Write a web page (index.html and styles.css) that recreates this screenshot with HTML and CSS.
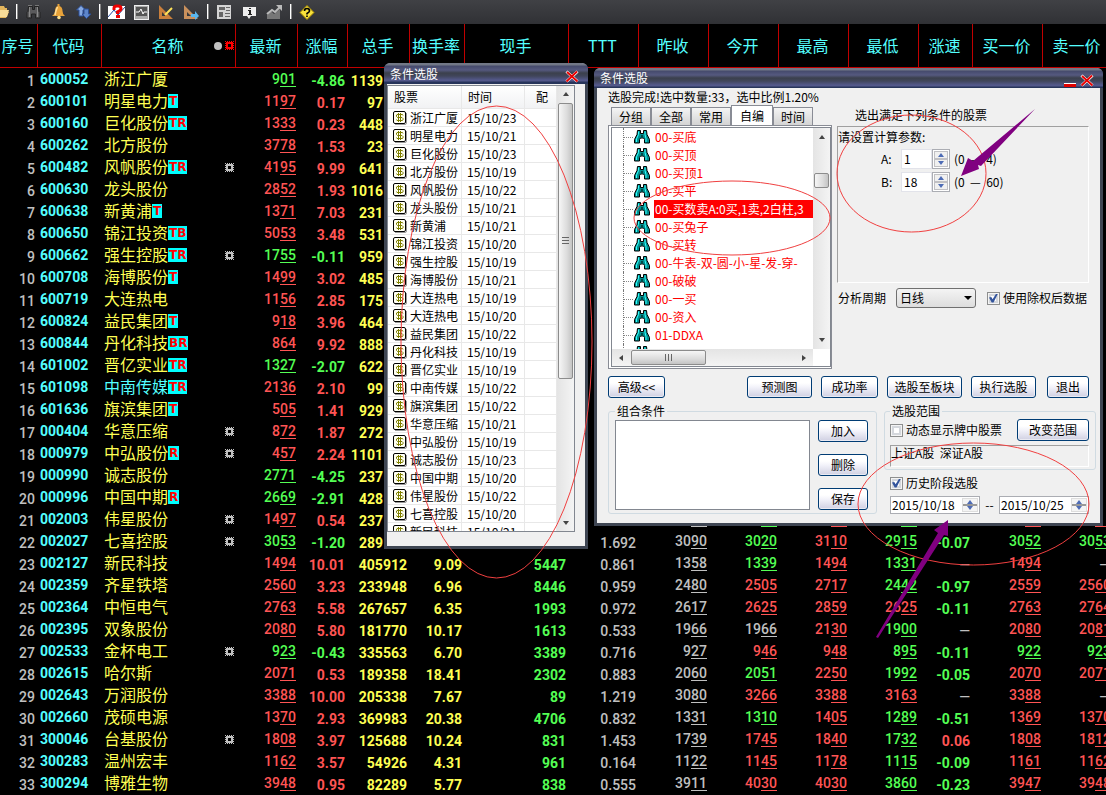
FILE: index.html
```html
<!DOCTYPE html>
<html lang="zh-CN">
<head>
<meta charset="utf-8">
<title>条件选股</title>
<link rel="stylesheet" href="styles.css">
</head>
<body>
<svg class="defs" aria-hidden="true">
  <symbol id="sun" viewBox="0 0 9 9"><path fill-rule="evenodd" d="M1 1h7v7H1zM3 3v3h3V3z"/><path d="M0 0h1v1H0zM8 0h1v1H8zM0 8h1v1H0zM8 8h1v1H8zM2 0h1v1H2zM4 0h1v1H4zM6 0h1v1H6zM2 8h1v1H2zM4 8h1v1H4zM6 8h1v1H6zM0 2h1v1H0zM0 4h1v1H0zM0 6h1v1H0zM8 2h1v1H8zM8 4h1v1H8zM8 6h1v1H8z"/></symbol>
  <symbol id="dollar" viewBox="0 0 14 14"><path d="M2 13.500h10q1.500 0 1.500-1.500V2" fill="none" stroke="#999"/><rect x=".5" y=".5" width="12" height="12" rx="1.500" fill="#fffff4" stroke="#000"/><path d="M10 4.500V4L9.500 3.500H4L3.500 4v1.500L4.500 6.500h4.500l1 1V9l-.5.5H4L3.500 9v-.5M5.500 2v9M7.500 2v9" fill="none" stroke="#808000"/></symbol>
  <symbol id="scope" viewBox="0 0 16 14"><path d="M3.500.5h3v3h3v-3h3l.5 4 2.500 5v3.500h-5V9.500l-1-1.500h-3l-1 1.500V13h-5V9.500l2.500-5z" fill="#008f8f" stroke="#000"/><path d="M4.500 1.500v3l-2 4.500v3M11 1.500v3l1 4v3.500" fill="none" stroke="#3ff"/><path d="M7.500 5h1v2h-1z" fill="#000"/></symbol>
  <symbol id="cross" viewBox="0 0 14 13"><path d="M1.500 1.500l11 10M12.500 1.500l-11 10" fill="none" stroke="#fff" stroke-width="3"/><path d="M2 2l10.500 9.500M12 1.500L1.500 11.500" fill="none" stroke="#e80000" stroke-width="1.800"/></symbol>
</svg>

<main class="screen">
  <nav class="toolbar" aria-label="工具栏">
    <button class="tool tool-cut" aria-label="打开"><svg viewBox="0 0 9 18"><path d="M0 4h4l1 2h2v4h2l-3 6H0z" fill="#e3b55c"/><path d="M0 8h9l-2 7H0z" fill="#f7dc98"/></svg></button>
    <i class="sep"></i>
    <button class="tool" aria-label="查找"><svg viewBox="0 0 17 18"><path d="M3.500 4.500h4v3h2v-3h4l.5 5 1 1v5.500h-4.500v-4h-4v4H2v-5.500l1-1z" fill="#5a5a5c" stroke="#222"/><path d="M4.500 5v10M12.500 5v10" stroke="#8a8a8a"/><path d="M3 3h4v1H3zM10 3h4v1h-4z" fill="#777"/></svg></button>
    <button class="tool" aria-label="提醒"><svg viewBox="0 0 17 18"><path d="M7.500 2h2v2q3 1 3 5 0 3 2.500 5H2q3-2 3-5 0-4 2.500-5z" fill="#e8a33a"/><path d="M7.500 5q-1.500 3-2.500 8" stroke="#ffe09a" stroke-width="1.500" fill="none"/><circle cx="9" cy="15.500" r="1.800" fill="#ffe08a"/></svg></button>
    <button class="tool" aria-label="刷新"><svg viewBox="0 0 17 18"><path d="M1.500 8l4.500-4.500L10.500 8H8v6H4V8z" fill="#86a9e0" stroke="#2c4f96"/><path d="M9 7h4.500v5H16l-4.500 4.500L7 12h2z" fill="#5d86ca" stroke="#2c4f96"/></svg></button>
    <i class="sep"></i>
    <button class="tool" aria-label="帮助图"><svg viewBox="0 0 17 18"><path d="M0 4h17v13H0z" fill="#fff"/><path d="M0 15l6-7 4 5 7-8" fill="none" stroke="#224a9c"/><path d="M6 8V6q0-2 3-2h1q3 0 3 2.500 0 2-3.500 3.500v2" fill="none" stroke="#e00" stroke-width="3"/><path d="M8 13h4v3H8z" fill="#e00"/></svg></button>
    <button class="tool" aria-label="监视"><svg viewBox="0 0 17 18"><rect x="1.500" y="3.500" width="14" height="14" fill="#aaa" stroke="#eee"/><path d="M3 5h11v9H3z" fill="#555"/><path d="M3 10h3l2-3 2 5 1-2h3" fill="none" stroke="#fff"/></svg></button>
    <button class="tool" aria-label="画线"><svg viewBox="0 0 17 18"><path fill-rule="evenodd" d="M1 3l14 14H1zM4 10v4h4z" fill="#c97f3c"/><path d="M7 13L14 6" stroke="#ffe35a" stroke-width="2"/></svg></button>
    <button class="tool" aria-label="移动画线"><svg viewBox="0 0 17 18"><path fill-rule="evenodd" d="M1 3l14 14H1zM4 10v4h4z" fill="#c9905c"/><path d="M8 12h4V9l4 5-4 4v-3H8z" fill="#59b6ee"/></svg></button>
    <i class="sep"></i>
    <button class="tool" aria-label="资讯"><svg viewBox="0 0 17 18"><path d="M1 3h14v14H1z" fill="#d4d4d4"/><path d="M3 5h6v3H3zM3 10h4v5H3zM10 5h4v1h-4zM10 8h4v1h-4zM9 11h5v1H9zM9 14h5v1H9z" fill="#666"/></svg></button>
    <button class="tool" aria-label="信息"><svg viewBox="0 0 17 18"><path d="M2 5h13v9h-5l-2 3-2-3H2z" fill="#eee"/><path d="M8 6h2v1H8zM7 8h3v4h1v1H7v-1h1V9H7z" fill="#222"/></svg></button>
    <button class="tool" aria-label="走势"><svg viewBox="0 0 17 18"><path d="M1 17v-4l4-4 3 3 6-5v10z" fill="#777"/><path d="M1 12l5-4 3 2 5-5" fill="none" stroke="#bbb" stroke-width="2"/><path d="M10 3h6v6z" fill="#bbb"/></svg></button>
    <i class="sep"></i>
    <button class="tool" aria-label="帮助"><svg viewBox="0 0 17 18"><path d="M8 3.500l7 7-7 7-7-7z" fill="#f8e23c" stroke="#a88a00"/><path d="M5.500 9q0-2.500 2.500-2.500T10.500 9q0 1-2.500 2.500v1M8 13.500V15" fill="none" stroke="#000" stroke-width="1.600"/></svg></button>
  </nav>

  <table class="quotes">
    <colgroup><col class="c38"><col class="c64"><col class="c134"><col class="c62"><col class="c50"><col class="c62"><col class="c55"><col class="c104"><col class="c70"><col class="c70"><col class="c70"><col class="c70"><col class="c70"><col class="c54"><col class="c70"><col class="c70"></colgroup>
    <thead><tr>
      <th>序号</th><th>代码</th>
      <th class="th-name">名称<span class="marks"><i class="dot"></i><svg class="sun sun-red"><use href="#sun"/></svg></span></th>
      <th>最新</th><th>涨幅</th><th>总手</th><th>换手率</th><th>现手</th><th>TTT</th><th>昨收</th><th>今开</th><th>最高</th><th>最低</th><th>涨速</th><th>买一价</th><th>卖一价</th>
    </tr></thead>
    <tbody id="quotes"></tbody>
  </table>

  <section class="window list-window" aria-label="选股结果">
    <header class="titlebar"><h2>条件选股</h2><button class="close" aria-label="关闭"><svg><use href="#cross"/></svg></button></header>
    <div class="list-body">
      <div class="list-box">
        <table class="picks">
          <thead><tr><th class="p-name">股票</th><th class="p-date">时间</th><th class="p-cfg">配</th></tr></thead>
          <tbody id="picks"></tbody>
        </table>
        <div class="vbar list-bar"><i class="up"></i><i class="thumb"></i><i class="down"></i></div>
      </div>
    </div>
  </section>

  <section class="window pick-window" aria-label="条件选股">
    <header class="titlebar"><h2>条件选股</h2><button class="minimize" aria-label="最小化"></button><button class="close" aria-label="关闭窗口"><svg><use href="#cross"/></svg></button></header>
    <div class="pick-body">
      <p class="status">选股完成!选中数量:33，选中比例1.20%</p>
      <div class="upper">
        <div class="formulas">
          <div class="tabs" role="tablist"><button>分组</button><button>全部</button><button>常用</button><button class="active">自编</button><button>时间</button></div>
          <div class="pane"><div class="tree-box">
            <ul class="tree" id="tree"></ul>
            <div class="vbar tree-bar"><i class="up"></i><i class="thumb"></i><i class="down"></i></div>
            <div class="hbar"><i class="left"></i><i class="thumb"></i><i class="right"></i></div>
          </div></div>
        </div>
        <div class="settings">
          <p class="settings-title">选出满足下列条件的股票</p>
          <div class="params">
            <p>请设置计算参数:</p>
            <div class="param"><label for="pa">A:</label><input id="pa" value="1"><span class="spin"><button aria-label="A 加"><i class="up"></i></button><button aria-label="A 减"><i class="down"></i></button></span><span>(0 &nbsp;— &nbsp;4)</span></div>
            <div class="param"><label for="pb">B:</label><input id="pb" value="18"><span class="spin"><button aria-label="B 加"><i class="up"></i></button><button aria-label="B 减"><i class="down"></i></button></span><span>(0 &nbsp;— &nbsp;60)</span></div>
          </div>
          <div class="period">
            <label for="period">分析周期</label>
            <span class="select"><select id="period"><option>日线</option></select></span>
            <label class="check"><input type="checkbox" checked>使用除权后数据</label>
          </div>
        </div>
      </div>
      <div class="actions">
        <button class="btn w57">高级&lt;&lt;</button>
        <button class="btn w65 push">预测图</button>
        <button class="btn w57">成功率</button>
        <button class="btn w75">选股至板块</button>
        <button class="btn w65">执行选股</button>
        <button class="btn w42 leave">退出</button>
      </div>
      <div class="lower">
        <fieldset class="combo">
          <legend>组合条件</legend>
          <div class="combo-in">
            <div class="combo-list"></div>
            <div class="combo-btns"><button class="btn">加入</button><button class="btn">删除</button><button class="btn">保存</button></div>
          </div>
        </fieldset>
        <div class="scope-col">
          <fieldset class="range">
            <legend>选股范围</legend>
            <div class="range-row"><label class="check"><input type="checkbox">动态显示牌中股票</label><button class="btn w72">改变范围</button></div>
            <div class="sunken">上证A股 &nbsp;深证A股</div>
          </fieldset>
          <div class="history">
            <label class="check"><input type="checkbox" checked>历史阶段选股</label>
            <div class="dates">
              <span class="date"><input aria-label="开始日期" value="2015/10/18"><button aria-label="调整开始日期"><i class="up"></i><i class="down"></i></button></span>
              <span>--</span>
              <span class="date"><input aria-label="结束日期" value="2015/10/25"><button aria-label="调整结束日期"><i class="up"></i><i class="down"></i></button></span>
            </div>
          </div>
        </div>
      </div>
    </div>
  </section>

  <svg class="notes" width="1106" height="795" viewBox="0 0 1106 795" aria-hidden="true">
    <g fill="none" stroke="#f04040" stroke-width="1">
      <ellipse cx="496.500" cy="342" rx="95.500" ry="236"/>
      <ellipse cx="732" cy="218" rx="98" ry="37"/>
      <ellipse cx="911.500" cy="173.500" rx="74.500" ry="58.500"/>
      <ellipse cx="973.500" cy="504" rx="115.500" ry="61"/>
    </g>
    <path d="M961 176l7-18 5 3 62-52-54 57-3-1 1 4zM948 520l-14 10 4 3-62 104 2 1 66-103 4 1z" fill="#800080"/>
  </svg>
</main>
<script src="app.js"></script>
</body>
</html>
```

FILE: styles.css
```css
* { box-sizing: border-box; }
body { margin: 0; background: #000; overflow: hidden; font-family: "Noto Sans CJK SC", sans-serif; }
button, input, select { font: inherit; color: inherit; margin: 0; padding: 0; border: 0; background: none; border-radius: 0; }
p, h2, ul { margin: 0; padding: 0; font-weight: 400; }
i { font-style: normal; }
.defs { position: absolute; width: 0; height: 0; }
.screen { position: relative; min-height: 100vh; overflow: hidden; }

/* toolbar */
.toolbar { display: flex; align-items: center; gap: 8px; height: 24px; background: linear-gradient(#404145, #303135); }
.tool { flex: none; width: 17px; height: 18px; display: block; }
.tool-cut { width: 9px; }
.tool svg { display: block; width: 100%; height: 100%; margin-top: -2px; }
.sep { flex: none; width: 1px; height: 15px; margin: -2px 0 0 -1px; background: #fff; box-shadow: 1px 0 #888; }

/* quotes */
.quotes { width: 1113px; table-layout: fixed; border-collapse: separate; border-spacing: 0; }
.c38 { width: 38px; } .c64 { width: 64px; } .c134 { width: 134px; } .c62 { width: 62px; } .c50 { width: 50px; }
.c55 { width: 55px; } .c104 { width: 104px; } .c70 { width: 70px; } .c54 { width: 54px; }
.quotes th { height: 44px; padding: 0 2px 2px 0; border: solid #c00000; border-width: 0 1px 1px 0; color: #54ffff; font-weight: 400; font-size: 16px; line-height: 24px; text-align: center; white-space: nowrap; }
.th-name { position: relative; }
.marks { position: absolute; right: 1px; top: 17px; display: flex; align-items: center; gap: 3px; }
.dot { width: 8px; height: 8px; border-radius: 50%; background: #c0c0c0; }
.sun { display: block; width: 9px; height: 9px; fill: #c0c0c0; }
.sun-red { fill: #f00; }
.quotes td { height: 22px; padding: 0 3px 0 0; text-align: right; white-space: nowrap; font: 700 14px/18px Roboto, "Liberation Sans", sans-serif; vertical-align: bottom; }
.quotes td.idx { color: #c0c0c0; font-weight: 500; }
.quotes td.code { text-align: left; padding: 0 0 2px 2px; color: #54ffff; }
.quotes td.name { padding: 0 2px; vertical-align: top; }
.name div { display: flex; align-items: center; height: 20px; font: 400 16px/20px "Noto Sans CJK SC", sans-serif; color: #ffff54; }
.name .alt { color: #54ffff; }
.tag { height: 14px; margin-top: 2px; padding: 0 1px; background: #0ff; color: #f00; font: 700 12px/14px "DejaVu Sans", sans-serif; }
.name .sun { margin: 2px 0 0 auto; }
.quotes td.price { padding: 0 2px 3px 0; font-weight: 500; line-height: 16px; }
.price u { display: inline-block; width: 16px; height: 16px; border-bottom: 1px solid; text-decoration: none; vertical-align: bottom; }
.quotes td.behind { padding-right: 27px; }
.g { color: #54ff54; } .r { color: #ff5454; } .y { color: #ffff54; } .w { color: #c0c0c0; }
.quotes td.w { font-weight: 500; }

/* windows */
.window { position: absolute; display: flex; flex-direction: column; border: solid #3f4653; border-width: 0 3px 3px; border-radius: 6px 6px 0 0; background: #f0f0f0; color: #000; font-size: 12px; line-height: 16px; }
.titlebar { display: flex; align-items: center; flex: none; height: 21px; margin: 0 -3px; padding: 0 9px 0 6px; border-radius: 6px 6px 0 0; color: #fff; background: linear-gradient(#727887 0 2px, #454a6c 3px, #55597f 7px, #3b404c 10px, #40455a 13px, #53588a 17px, #53588a 18px, #27345a 19px); }
.titlebar h2 { flex: 1; font-size: 12px; line-height: 18px; }
.close { width: 14px; height: 13px; margin-top: 5px; }
.close svg { display: block; width: 14px; height: 13px; }
.minimize { width: 12px; height: 4px; margin: 14px 4px 0 0; background: #e00000; border-top: 1px solid #fff; }
.up, .down, .left, .right { display: block; width: 0; height: 0; border: 3px solid transparent; }
.up { border-top: 0; border-bottom: 4px solid #444; }
.down { border-bottom: 0; border-top: 4px solid #444; }
.left { border-left: 0; border-right: 4px solid #444; }
.right { border-right: 0; border-left: 4px solid #444; }
.vbar { display: flex; flex-direction: column; align-items: center; justify-content: space-between; background: linear-gradient(90deg, #e4e4e4, #f4f4f4); }
.thumb { display: flex; border: 1px solid #8c8c8c; border-radius: 2px; background: linear-gradient(90deg, #f6f6f6, #dcdcdc 60%, #c4c4c4); }
.thumb::after { content: ""; margin: auto; }

.list-window { left: 384px; top: 63px; width: 204px; height: 486px; }
.list-body { flex: 1; min-height: 0; padding: 1px 10px 14px 0; }
.list-box { display: flex; height: 100%; overflow: hidden; border: 1px solid #828790; background: #fff; }
.picks { flex: 1; table-layout: fixed; border-spacing: 0; align-self: flex-start; }
.picks th, .picks td { padding: 0; text-align: left; font-weight: 400; border: solid #e8e8e8; border-width: 0 1px 1px 0; white-space: nowrap; }
.picks th { height: 23px; padding-left: 6px; background: linear-gradient(#fff, #f1f2f4); }
.picks td { height: 18px; line-height: 17px; overflow: hidden; }
.picks .p-name { width: 74px; } .picks .p-date { width: 63px; } .picks .p-cfg { padding-left: 11px; }
.picks td:first-child div { display: flex; align-items: center; gap: 3px; padding-left: 5px; height: 17px; }
.picks td svg { width: 14px; height: 14px; }
.picks td:nth-child(2) { padding-left: 5px; }
.list-bar { flex: none; width: 17px; padding: 6px 1px; }
.list-bar .thumb { width: 15px; height: 276px; margin: 7px 0 auto; }
.list-bar .thumb::after { width: 7px; height: 8px; background: repeating-linear-gradient(#666 0 1px, transparent 1px 3px); }

.pick-window { left: 594px; top: 68px; width: 509px; }
.pick-window .titlebar { height: 20px; }
.pick-body { padding: 0 4px 9px 11px; }
.status { line-height: 17px; }
.upper { display: flex; gap: 5px; margin-right: 7px; }
.formulas { width: 224px; }
.tabs { display: flex; align-items: flex-end; height: 20px; padding-left: 3px; }
.tabs button { height: 18px; width: 40px; border: 1px solid #898c95; border-bottom: 0; background: linear-gradient(#f4f4f4, #d4d4d4); line-height: 17px; }
.tabs .active { width: 42px; height: 20px; background: #fff; }
.pane { border: 1px solid #898c95; padding: 1px 0 1px 2px; background: #fff; }
.tree-box { display: grid; grid-template-columns: 1fr 17px; grid-template-rows: 221px 17px; border: 1px solid #828790; }
.tree { min-width: 0; overflow: hidden; list-style: none; color: #f00; }
.tree li { display: flex; align-items: center; height: 18px; padding-left: 11px; white-space: nowrap; }
.tree li::before { content: ""; flex: none; width: 10px; height: 18px; border-left: 1px dotted #777; background: repeating-linear-gradient(90deg, #888 0 1px, transparent 1px 2px) 0 9px / 10px 1px no-repeat; }
.tree svg { flex: none; width: 16px; height: 14px; }
.tree span { flex: 1; min-width: 0; overflow: hidden; margin-left: 4px; padding-left: 1px; line-height: 18px; }
.tree .selected { background: #f00; color: #fff; }
.tree-bar { padding: 7px 0; }
.tree-bar .thumb { width: 15px; height: 15px; margin: 34px 0 auto; }
.hbar { display: flex; align-items: center; justify-content: space-between; padding: 0 7px; background: linear-gradient(#e4e4e4, #f4f4f4); }
.hbar .thumb { width: 75px; height: 15px; margin: 0 auto 0 8px; background: linear-gradient(#f6f6f6, #dcdcdc 60%, #c4c4c4); }
.hbar .thumb::after { width: 8px; height: 7px; background: repeating-linear-gradient(90deg, #666 0 1px, transparent 1px 3px); }

.settings { flex: 1; }
.settings-title { padding-left: 18px; line-height: 20px; }
.params { height: 157px; margin-top: 1px; border: 1px solid; border-color: #a0a0a0 #fff #fff #a0a0a0; }
.params p { line-height: 19px; }
.param { display: flex; align-items: center; height: 20px; margin: 3px 0 0 43px; }
.param label { width: 20px; }
.param input { width: 31px; height: 20px; padding: 0 0 2px 2px; background: #fff; border: 1px solid #e2e3ea; }
.spin { display: flex; flex-direction: column; width: 18px; height: 20px; margin-right: 4px; padding: 1px; border: 1px solid #abadb3; background: #fff; }
.spin button { flex: 1; display: grid; place-items: center; border: 1px solid #c0c0c4; background: #f0f0f0; }
.spin .up, .date .up { border-bottom-color: #4d6bb5; }
.spin .down, .date .down { border-top-color: #4d6bb5; }
.period { display: flex; align-items: center; height: 20px; margin-top: 5px; padding-left: 1px; white-space: nowrap; }
.select { position: relative; width: 80px; height: 20px; margin: 0 11px 0 10px; }
.select::after { content: ""; position: absolute; right: 4px; top: 8px; border: 4px solid transparent; border-top-color: #000; border-bottom: 0; pointer-events: none; }
.select select { appearance: none; width: 100%; height: 20px; padding-left: 3px; border: 1px solid #707070; border-radius: 3px; background: linear-gradient(#f4f4f4, #ddd); }
.check { display: flex; align-items: center; gap: 3px; white-space: nowrap; }
.check input { appearance: none; flex: none; width: 13px; height: 13px; border: 1px solid #8e8f8f; background: #fff; box-shadow: inset 0 0 0 1px #f4f4f4, inset 0 0 0 3px #d4d7dc; }
.check input:checked::before { content: ""; display: block; width: 9px; height: 9px; margin: 1px; background: #33549c; clip-path: polygon(0 45%, 25% 40%, 40% 65%, 80% 0, 100% 0, 50% 100%, 30% 100%); }

.btn { height: 22px; border: 1px solid #003c74; border-radius: 3px; background: linear-gradient(#fff 30%, #f3f3fa 50%, #d0d0e2); box-shadow: inset 0 0 0 1px #fff8; line-height: 18px; text-align: center; white-space: nowrap; }
.w57 { width: 57px; } .w65 { width: 65px; } .w75 { width: 75px; } .w42 { width: 42px; } .w72 { width: 72px; }
.actions { display: flex; gap: 9px; margin: 7px 7px 0 0; }
.push { margin-left: auto; }
.leave { margin-left: 2px; }
.lower { display: flex; gap: 7px; margin-top: 5px; }
fieldset { min-width: 0; margin: 0; border: 1px solid #d0dbe2; border-radius: 3px; }
legend { padding: 0 2px; line-height: 16px; }
.combo { flex: 1; padding: 1px 8px 3px 6px; }
.combo-in { display: flex; gap: 8px; }
.combo-list { flex: 1; border: 1px solid #828790; background: #fff; }
.combo-btns { display: flex; flex-direction: column; gap: 12px; width: 50px; }
.scope-col { width: 212px; }
.range { padding: 0 6px 2px 5px; }
.range-row { display: flex; justify-content: space-between; align-items: center; }
.sunken { height: 22px; margin-top: 4px; border: 1px solid; border-color: #a0a0a0 #fff #fff #a0a0a0; line-height: 13px; }
.history { padding: 6px 7px 0 6px; }
.history .check { height: 14px; }
.dates { display: flex; align-items: center; justify-content: space-between; margin-top: 6px; }
.date { display: flex; width: 90px; height: 18px; padding: 1px; border: 1px solid #abadb3; background: #fff; }
.date input { flex: 1; min-width: 0; }
.date button { display: flex; flex-direction: column; align-items: center; justify-content: center; gap: 2px; width: 16px; border: 1px solid #ddd; background: linear-gradient(#f4f4f4 45%, #999 45% 55%, #f4f4f4 55%); }

.notes { position: absolute; left: 0; top: 0; pointer-events: none; }
```

FILE: app.js
```js
// code, name, tags, sun mark, last, change, volume, then turnover, lot, TTT and the price columns
// prices carry a colour letter: g down, r up, w unchanged
const quotes = `
600052|浙江广厦|||g901|g-4.86|1139
600101|明星电力|T||r1197|r0.17|97
600160|巨化股份|TR||r1333|r0.23|448
600262|北方股份|||r3778|r1.53|23
600482|风帆股份|TR|*|r4195|r9.99|641
600630|龙头股份|||r2852|r1.93|1016
600638|新黄浦|T||r1371|r7.03|231
600650|锦江投资|TB||r5053|r3.48|531
600662|强生控股|TR|*|g1755|g-0.11|959
600708|海博股份|T||r1499|r3.02|485
600719|大连热电|||r1156|r2.85|175
600824|益民集团|T||r918|r3.96|464
600844|丹化科技|BR||r864|r9.92|888
601002|晋亿实业|TR||g1327|g-2.07|622
601098|中南传媒|TR||r2136|r2.10|99
601636|旗滨集团|T||r505|r1.41|929
000404|华意压缩||*|r872|r1.87|272
000979|中弘股份|R|*|r457|r2.24|1101
000990|诚志股份|||g2771|g-4.25|237
000996|中国中期|R||g2669|g-2.91|428
002003|伟星股份||*|r1497|r0.54|237||||w|g|r|g||r|r
002027|七喜控股||*|g3053|g-1.20|289|||1.692|w3090|g3020|r3110|g2915|g-0.07|g3052|g3053
002127|新民科技|||r1494|r10.01|405912|9.09|5447|0.861|w1358|g1339|r1494|g1331|w—|r1494|w—
002359|齐星铁塔|||r2560|r3.23|233948|6.96|8446|0.959|w2480|r2505|r2717|g2442|g-0.97|r2559|r2560
002364|中恒电气|||r2763|r5.58|267657|6.35|1993|0.972|w2617|r2625|r2859|r2625|g-0.11|r2763|r2764
002395|双象股份|||r2080|r5.80|181770|10.17|1613|0.533|w1966|w1966|r2130|g1900|w—|r2080|r2081
002533|金杯电工||*|g923|g-0.43|335563|6.70|3389|0.716|w927|r946|r948|g895|g-0.11|g922|g923
002615|哈尔斯|||r2071|r0.53|189358|18.41|2302|0.883|w2060|g2051|r2250|g1992|g-0.05|r2070|r2071
002643|万润股份|||r3388|r10.00|205338|7.67|89|1.219|w3080|r3266|r3388|r3163|w—|r3388|w—
002660|茂硕电源|||r1370|r2.93|369983|20.38|4706|0.832|w1331|g1310|r1405|g1289|g-0.51|r1369|r1370
300046|台基股份||*|r1808|r3.97|125688|10.24|831|1.453|w1739|r1745|r1840|g1732|r0.06|r1808|r1812
300283|温州宏丰|||r1162|r3.57|54926|4.31|961|0.164|w1122|r1145|r1178|g1115|g-0.09|r1161|r1162
300294|博雅生物|||r3948|r0.95|82289|5.77|838|0.555|w3911|r4030|r4030|g3860|g-0.23|r3947|r3948`.trim().split("\n");

const price = v => {
  if (!v) return "<td></td>";
  if (v[1] === "—") return `<td class="w">—</td>`;
  return `<td class="price ${v[0]}">${v.slice(1, -2)}<u>${v.slice(1).slice(-2)}</u></td>`;
};
const plain = (v, cls) => `<td class="${cls}">${v || ""}</td>`;
const tinted = v => v ? plain(v.slice(1), v[0]) : "<td></td>";

document.getElementById("quotes").innerHTML = quotes.map((line, i) => {
  const [code, name, tag, sun, last, chg, vol, turn, lot, ttt, prev, open, high, low, speed, bid, ask] = line.split("|");
  return `<tr><td class="idx">${i + 1}</td><td class="code">${code}</td>
    <td class="name"><div class="${code === "601098" ? "alt" : ""}">${name}${tag ? `<b class="tag">${tag}</b>` : ""}${sun ? '<svg class="sun"><use href="#sun"/></svg>' : ""}</div></td>
    ${price(last)}${tinted(chg)}${plain(vol, i < 22 ? "y behind" : "y")}${plain(turn, "y")}${plain(lot, "g")}${plain(ttt, "w")}
    ${price(prev)}${price(open)}${price(high)}${price(low)}${tinted(speed)}${price(bid)}${price(ask)}</tr>`;
}).join("");

const picks = "浙江广厦23 明星电力21 巨化股份23 北方股份19 风帆股份22 龙头股份21 新黄浦21 锦江投资20 强生控股19 海博股份21 大连热电19 大连热电20 益民集团22 丹化科技19 晋亿实业19 中南传媒22 旗滨集团22 华意压缩21 中弘股份19 诚志股份23 中国中期20 伟星股份22 七喜控股20 新民科技21".split(" ");
document.getElementById("picks").innerHTML = picks.map(p =>
  `<tr><td><div><svg><use href="#dollar"/></svg>${p.slice(0, -2)}</div></td><td>15/10/${p.slice(-2)}</td><td></td></tr>`).join("");

const formulas = ["00-买底", "00-买顶", "00-买顶1", "00-买平", "00-买数卖A:0买,1卖,2白柱,3", "00-买兔子", "00-买转", "00-牛表-双-圆-小-星-发-穿-", "00-破破", "00-一买", "00-资入", "01-DDXA", ""];
document.getElementById("tree").innerHTML = formulas.map((f, i) =>
  `<li><svg><use href="#scope"/></svg><span class="${i === 4 ? "selected" : ""}">${f}</span></li>`).join("");
```
